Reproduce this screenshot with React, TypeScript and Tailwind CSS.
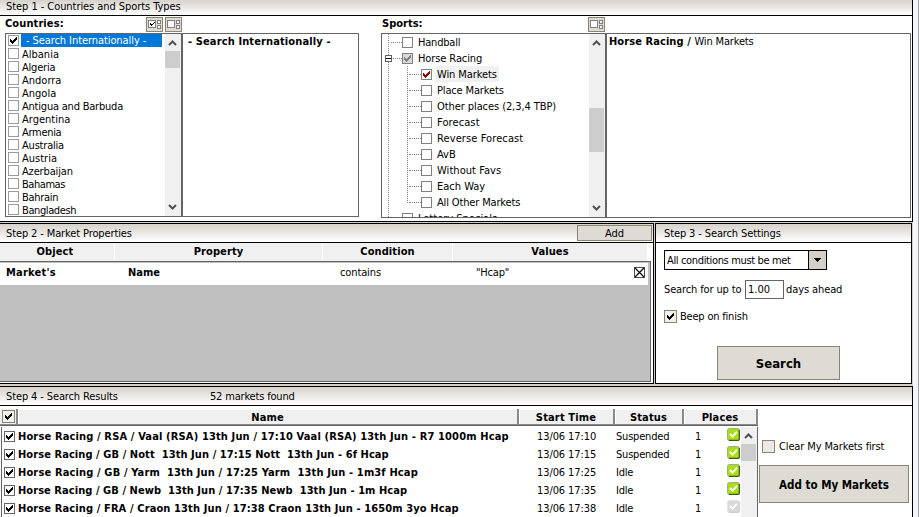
import React from 'react';
import clsx from 'clsx';

const countries = [
  { name: 'Albania', track: '' },
  { name: 'Algeria', track: 'tracking-[-0.2px]' },
  { name: 'Andorra', track: '' },
  { name: 'Angola', track: '' },
  { name: 'Antigua and Barbuda', track: 'tracking-[-0.21px]' },
  { name: 'Argentina', track: '' },
  { name: 'Armenia', track: 'tracking-[-0.3px]' },
  { name: 'Australia', track: 'tracking-[-0.2px]' },
  { name: 'Austria', track: '' },
  { name: 'Azerbaijan', track: 'tracking-[-0.15px]' },
  { name: 'Bahamas', track: 'tracking-[-0.45px]' },
  { name: 'Bahrain', track: 'tracking-[-0.3px]' },
  { name: 'Bangladesh', track: 'tracking-[-0.4px]' },
];

const winTypes = [
  { name: 'Win Markets', track: 'tracking-[-0.1px]', checked: true },
  { name: 'Place Markets', track: 'tracking-[-0.15px]' },
  { name: 'Other places (2,3,4 TBP)', track: 'tracking-[-0.08px]' },
  { name: 'Forecast', track: 'tracking-[0.1px]' },
  { name: 'Reverse Forecast', track: 'tracking-[0.1px]' },
  { name: 'AvB', track: 'tracking-[0px]' },
  { name: 'Without Favs', track: 'tracking-[0.05px]' },
  { name: 'Each Way', track: 'tracking-[0px]' },
  { name: 'All Other Markets', track: 'tracking-[-0.15px]' },
];

const results = [
  { name: 'Horse Racing / RSA / Vaal (RSA) 13th Jun / 17:10 Vaal (RSA) 13th Jun - R7 1000m Hcap', track: 'tracking-[0.145px]', time: '13/06 17:10', status: 'Suspended', on: true },
  { name: 'Horse Racing / GB / Nott  13th Jun / 17:15 Nott  13th Jun - 6f Hcap', track: 'tracking-[0.075px]', time: '13/06 17:15', status: 'Suspended', on: true },
  { name: 'Horse Racing / GB / Yarm  13th Jun / 17:25 Yarm  13th Jun - 1m3f Hcap', track: 'tracking-[0.145px]', time: '13/06 17:25', status: 'Idle', on: true },
  { name: 'Horse Racing / GB / Newb  13th Jun / 17:35 Newb  13th Jun - 1m Hcap', track: 'tracking-[0.06px]', time: '13/06 17:35', status: 'Idle', on: true },
  { name: 'Horse Racing / FRA / Craon 13th Jun / 17:38 Craon 13th Jun - 1650m 3yo Hcap', track: 'tracking-[0.12px]', time: '13/06 17:38', status: 'Idle', on: false },
];

function Tick({ color = '#000' }: { color?: string }) {
  return (
    <svg className="block w-[7px] h-[7px]" viewBox="0 0 7 7" shapeRendering="crispEdges">
      <path d="M0 2h1v3H0zM1 3h1v3H1zM2 4h1v3H2zM3 3h1v3H3zM4 2h1v3H4zM5 1h1v3H5zM6 0h1v3H6z" fill={color} />
    </svg>
  );
}

function Box({ checked, size = 'w-[11px] h-[11px]', look = 'border-[#9c9c9c] bg-white', color }: { checked?: boolean; size?: string; look?: string; color?: string }) {
  return (
    <span className={clsx('flex items-center justify-center shrink-0 border', size, look)}>
      {checked && <Tick color={color} />}
    </span>
  );
}

function Chevron({ down }: { down?: boolean }) {
  return (
    <svg className={clsx('block w-[9px] h-[6px] -ml-px', down && 'rotate-180')} viewBox="0 0 9 6">
      <path d="M1 5L4.5 1.5L8 5" fill="none" stroke="#505050" strokeWidth="2" />
    </svg>
  );
}

function ScrollBar({ thumb, noDown }: { thumb: string; noDown?: boolean }) {
  return (
    <div className="flex flex-col w-4 shrink-0 bg-[#f0f0f0]">
      <div className="flex h-[17px] shrink-0 items-center justify-center"><Chevron /></div>
      <div className="flex-1"><div className={clsx('w-[15px] bg-[#cdcdcd]', thumb)} /></div>
      {!noDown && <div className="flex h-[18px] shrink-0 items-center justify-center"><Chevron down /></div>}
    </div>
  );
}

function Title({ children, height = 'h-[18px]' }: { children: React.ReactNode; height?: string }) {
  return (
    <div className={clsx('flex items-center shrink-0 box-content border-b border-black pl-1.5 tracking-[-0.12px] bg-linear-to-b from-[#d6d2cb] to-white', height)}>
      {children}
    </div>
  );
}

function SelectButton({ checked }: { checked?: boolean }) {
  return (
    <div className="flex items-center w-[17px] h-[15px] border border-[#8c8470] bg-[#dedad4]">
      <svg className="block w-[15px] h-[13px]" viewBox="0 0 15 13" shapeRendering="crispEdges">
        <rect x="1.5" y="2.5" width="7" height="7" fill="#fff" stroke="#808080" />
        {checked && <path d="M3 5h1v2H3zM4 6h1v2H4zM5 6h1v1H5zM6 5h1v1H6zM7 4h1v1H7z" fill="#000" />}
        <rect x="10.5" y="2.5" width="3" height="3" fill="#f4f4f4" stroke="#808080" />
        <rect x="10.5" y="7.5" width="3" height="3" fill="#f4f4f4" stroke="#808080" />
      </svg>
    </div>
  );
}

function TreeRow({ name, level, track, checked, selected, box, color }: { name: string; level: number; track?: string; checked?: boolean; selected?: boolean; box?: string; color?: string }) {
  return (
    <div className={clsx('flex items-center h-4 shrink-0', level === 1 ? 'pl-[9px]' : 'pl-[27px]')}>
      <span className={clsx('border-t border-dotted border-[#808080]', level === 1 ? 'w-[11px]' : 'w-[12px]')} />
      <Box checked={checked} look={box ?? 'border-[#808080] bg-white'} color={color} />
      <span className={clsx('ml-[4px] pl-px h-4 leading-[17px]', selected && 'bg-[#f0f0f0] pr-0.5', track)}>{name}</span>
    </div>
  );
}

function StatusIcon({ on }: { on: boolean }) {
  return (
    <svg className="block w-[13px] h-[13px]" viewBox="0 0 13 13">
      <rect x="0.5" y="0.5" width="12" height="12" rx="2" fill={on ? '#a8e010' : '#d8d8d8'} stroke={on ? '#a4a4a4' : '#e4e4e4'} />
      <path d="M2 12.3H11Q12.3 12.3 12.3 11V2" fill="none" stroke={on ? '#3c5a10' : '#cfcfcf'} strokeWidth="1.2" />
      <path d="M3 6L5.5 8.6L10 3.8" fill="none" stroke="#fff" strokeWidth="2" />
    </svg>
  );
}

function Countries() {
  return (
    <div className="flex flex-col w-[354px]">
      <div className="flex h-[17px]">
        <span className="w-[141px] leading-[15px] font-bold tracking-[0.1px]">Countries:</span>
        <div className="flex gap-0.5 pt-px"><SelectButton checked /><SelectButton /></div>
      </div>
      <div className="flex h-[184px]">
        <div className="flex w-[177px] border border-[#646464]">
          <div className="flex-1 overflow-hidden">
            <div className="flex h-[13px] items-center pl-0.5">
              <Box checked />
              <span className="ml-0.5 w-[141px] h-[13px] leading-[14px] pl-[5px] bg-[#0078d7] text-white tracking-[-0.08px]">- Search Internationally -</span>
            </div>
            {countries.map((c) => (
              <div key={c.name} className="flex h-[13px] items-center pl-0.5">
                <Box />
                <span className={clsx('ml-[3px] h-[13px] leading-[15px]', c.track)}>{c.name}</span>
              </div>
            ))}
          </div>
          <ScrollBar thumb="h-[17px]" />
        </div>
        <div className="w-[177px] border border-[#646464] pl-[5px] pt-px leading-[13px] font-bold tracking-[0.12px]">- Search Internationally -</div>
      </div>
    </div>
  );
}

function Sports() {
  return (
    <div className="flex flex-col w-[530px] ml-[22px]">
      <div className="flex h-[17px]">
        <span className="w-[207px] pl-px leading-[15px] font-bold">Sports:</span>
        <div className="pt-px"><SelectButton /></div>
      </div>
      <div className="flex h-[185px]">
        <div className="flex w-[225px] border border-[#646464]">
          <div className="relative flex-1 overflow-hidden">
            <div className="absolute left-[6px] top-0 h-full border-l border-dotted border-[#808080]" />
            <div className="absolute left-[25px] top-[32px] h-[137px] border-l border-dotted border-[#808080]" />
            <TreeRow name="Handball" level={1} track="tracking-[-0.2px]" />
            <TreeRow name="Horse Racing" level={1} track="tracking-[-0.1px]" checked box="border-[#808080] bg-[#d8d8d8]" color="#808080" />
            {winTypes.map((t) => (
              <TreeRow key={t.name} name={t.name} level={2} track={t.track} checked={t.checked} selected={t.checked} color="#8b0000" />
            ))}
            <TreeRow name="Lottery Specials" level={1} />
            <svg className="absolute left-[3px] top-[21px] w-[7px] h-[7px]" viewBox="0 0 7 7" shapeRendering="crispEdges">
              <rect x="0.5" y="0.5" width="6" height="6" fill="#fff" stroke="#606060" />
              <path d="M1 3h5v1H1z" fill="#000" />
            </svg>
          </div>
          <ScrollBar thumb="mt-[57px] h-[44px]" />
        </div>
        <div className="w-[305px] border border-[#646464] pl-0.5 pt-px leading-[13px]">
          <b className="tracking-[0.08px]">Horse Racing / </b><span className="tracking-[-0.15px]">Win Markets</span>
        </div>
      </div>
    </div>
  );
}

function MarketProperties() {
  return (
    <div className="flex flex-col w-[654px] border-y border-r border-black bg-white">
      <div className="relative">
        <Title>Step 2 - Market Properties</Title>
        <div className="absolute right-[1px] top-px w-[75px] h-4 border border-[#8c8470] bg-[#dedad4] text-center leading-[15px]">Add</div>
      </div>
      <div className="grid grid-cols-[114px_207px_129px_194px] gap-x-px h-[17px] leading-[18px] font-bold text-center tracking-[0.1px] *:bg-[#f0f0f0]">
        <span className="pr-1">Object</span>
        <span>Property</span>
        <span>Condition</span>
        <span>Values</span>
      </div>
      <div className="mt-px mb-px flex-1 w-[651px] border-y border-r border-[#646464] bg-[#c0c0c0] pt-px pr-0.5">
        <div className="flex items-center h-[22px] bg-white pl-1.5 pr-[3px] pb-1 font-bold">
          <span className="w-[122px] tracking-[0.22px]">Market's</span>
          <span className="w-[212px]">Name</span>
          <span className="w-[136px] font-normal tracking-[-0.12px]">contains</span>
          <span className="flex-1 font-normal tracking-[-0.2px]">"Hcap"</span>
          <svg className="block w-[11px] h-[11px]" viewBox="0 0 11 11">
            <rect x="0.5" y="0.5" width="10" height="10" fill="#fff" stroke="#505050" />
            <path d="M1 1L10 10M10 1L1 10" stroke="#000" strokeWidth="1.2" />
          </svg>
        </div>
      </div>
    </div>
  );
}

function SearchSettings() {
  return (
    <div className="flex flex-col w-[257px] ml-px border border-black bg-white">
      <Title><span className="pl-0.5">Step 3 - Search Settings</span></Title>
      <div className="flex flex-col pl-[8px] pt-[7px]">
        <div className="flex w-[163px] h-5 border border-black">
          <span className="flex-1 pl-0.5 leading-[19px] tracking-[-0.35px]">All conditions must be met</span>
          <span className="flex items-center justify-center w-[18px] border-l border-black bg-[#d4d0c8]">
            <svg className="block w-[7px] h-[4px]" viewBox="0 0 7 4" shapeRendering="crispEdges"><path d="M0 0h7v1H0zM1 1h5v1H1zM2 2h3v1H2zM3 3h1v1H3z" /></svg>
          </span>
        </div>
        <div className="flex items-center mt-[10px] h-[19px] leading-[21px]">
          <span className="w-[81px] tracking-[-0.13px]">Search for up to</span>
          <span className="w-[39px] h-[19px] border border-[#646464] pl-0.5 leading-[17px]">1.00</span>
          <span className="pl-0.5 tracking-[-0.1px]">days ahead</span>
        </div>
        <div className="flex items-center mt-[11px] h-[13px] leading-[15px]">
          <Box checked size="w-[13px] h-[13px]" look="border-[#8c8470] bg-[#f0efec]" />
          <span className="ml-[3px] tracking-[-0.2px]">Beep on finish</span>
        </div>
        <div className="ml-[53px] mt-[23px] w-[123px] h-[34px] border border-[#8c8470] bg-[#dedad4] text-center leading-[33px] text-[13px] font-bold">Search</div>
      </div>
    </div>
  );
}

function Results() {
  return (
    <div className="flex flex-col h-[131px] w-[913px] border-t border-r border-black bg-white">
      <Title>
        <span className="w-[204px]">Step 4 - Search Results</span>
        <span className="tracking-[-0.18px]">52 markets found</span>
      </Title>
      <div className="flex h-[111px]">
        <div className="flex flex-col w-[758px] pt-[3px]">
          <div className="flex h-[17px] font-bold text-center leading-[17px] border-b border-[#646464] tracking-[0.15px] *:bg-[#f0f0f0] *:border-r-2 *:border-b *:border-[#8a8a8a]">
            <div className="flex w-[18px] items-center pl-[2px]">
              <Box checked size="w-[13px] h-[13px]" look="border-[#8c8470] bg-[#f0efec]" />
            </div>
            <span className="w-[501px] shadow-[inset_1px_1px_#fff]">Name</span>
            <span className="w-24 shadow-[inset_1px_1px_#fff]">Start Time</span>
            <span className="w-[69px] shadow-[inset_1px_1px_#fff]">Status</span>
            <span className="w-[74px] shadow-[inset_1px_1px_#fff]">Places</span>
          </div>
          <div className="flex flex-1 ml-px mt-px border-x border-[#646464] overflow-hidden">
            <div className="w-[739px]">
              {results.map((r) => (
                <div key={r.name} className="flex h-[18px] items-center pl-0.5">
                  <Box checked look="border-[#646464] bg-white" />
                  <span className={clsx('ml-[3px] w-[519px] font-bold whitespace-pre', r.track)}>{r.name}</span>
                  <span className="w-[79px] tracking-[-0.1px]">{r.time}</span>
                  <span className="w-[79px] tracking-[-0.2px]">{r.status}</span>
                  <span className="w-[32px]">1</span>
                  <span className="-mt-1"><StatusIcon on={r.on} /></span>
                </div>
              ))}
            </div>
            <ScrollBar thumb="h-[17px]" noDown />
          </div>
        </div>
        <div className="pl-px pt-[34px]">
          <div className="flex items-center h-[13px] pl-[3px] leading-[15px]">
            <Box size="w-[13px] h-[13px]" look="border-[#8c8470] bg-[#ebe9e6]" />
            <span className="ml-1 tracking-[-0.13px]">Clear My Markets first</span>
          </div>
          <div className="mt-3 w-[150px] h-[38px] border border-[#8c8470] bg-[#dedad4] text-center leading-[38px] text-[11.5px] font-bold">Add to My Markets</div>
        </div>
      </div>
    </div>
  );
}

export default function App() {
  return (
    <div className="flex w-[919px] h-[517px] overflow-hidden bg-[#f4f5fa] border-r border-[#a0a0a4] text-black text-[11px] leading-[13px] whitespace-nowrap font-['DejaVu_Sans_Condensed','DejaVu_Sans',sans-serif]">
      <div className="flex flex-col w-[913px] h-[517px] bg-[#d4d0c8]">
        <div className="flex flex-col h-[222px] border-b border-r border-black bg-white">
          <Title height="h-[15px]"><span className="-mt-0.5 tracking-[-0.06px]">Step 1 - Countries and Sports Types</span></Title>
          <div className="flex pl-[5px]">
            <Countries />
            <Sports />
          </div>
        </div>
        <div className="flex mt-px h-[161px]">
          <MarketProperties />
          <SearchSettings />
        </div>
        <div className="h-0.5" />
        <Results />
      </div>
    </div>
  );
}
